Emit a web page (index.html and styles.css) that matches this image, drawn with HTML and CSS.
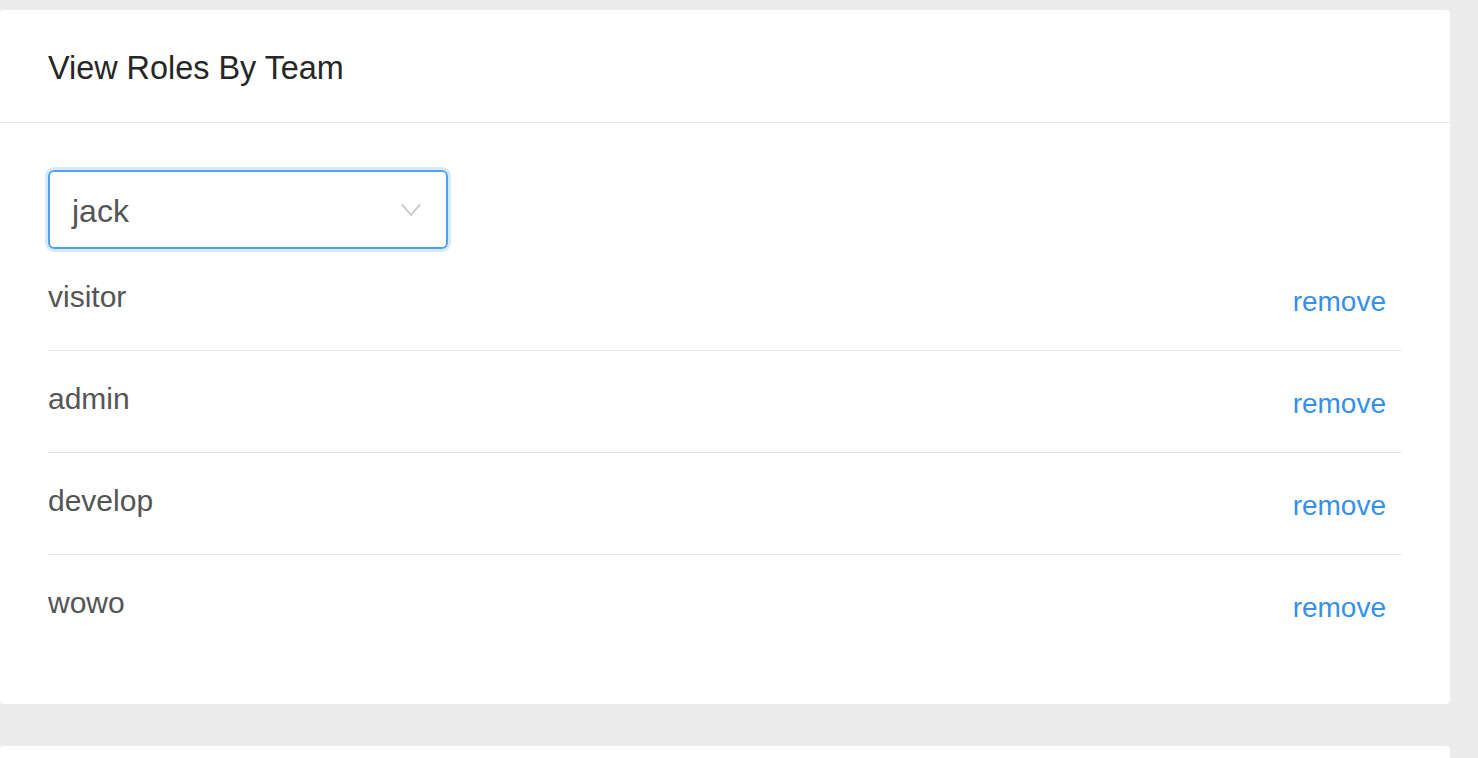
FILE: index.html
```html
<!DOCTYPE html>
<html lang="en">
<head>
<meta charset="utf-8">
<title>View Roles By Team</title>
<link rel="stylesheet" href="styles.css">
</head>
<body>
<div class="page">
  <section class="card">
    <header class="card-head">
      <h1 class="card-title">View Roles By Team</h1>
    </header>
    <div class="card-body">
      <div class="select">
        <span class="select-value">jack</span>
        <svg class="chevron" width="20" height="14" viewBox="0 0 20 14" aria-hidden="true">
          <path d="M1 1.5 L10 12 L19 1.5" fill="none" stroke="#c2c2c2" stroke-width="1.6"/>
        </svg>
      </div>
      <ul class="role-list">
        <li class="role-row"><span class="role-name">visitor</span><a class="role-remove" href="#">remove</a></li>
        <li class="role-row"><span class="role-name">admin</span><a class="role-remove" href="#">remove</a></li>
        <li class="role-row"><span class="role-name">develop</span><a class="role-remove" href="#">remove</a></li>
        <li class="role-row"><span class="role-name">wowo</span><a class="role-remove" href="#">remove</a></li>
      </ul>
    </div>
  </section>
  <section class="card card-next"></section>
</div>
</body>
</html>
```

FILE: styles.css
```css
html, body {
  margin: 0;
  padding: 0;
  background: #ececec;
  font-family: "Liberation Sans", Arial, sans-serif;
  overflow: hidden;
}

.page {
  padding: 10px 28px 0 0;
  display: flex;
  flex-direction: column;
  gap: 42px;
}

.card {
  background: #ffffff;
  border-radius: 4px;
}

.card-head {
  padding: 34px 48px 30px;
  border-bottom: 1px solid #e6e6e6;
}

.card-title {
  margin: 0;
  font-size: 32.4px;
  line-height: 48px;
  font-weight: 400;
  color: #262626;
}

.card-body {
  padding: 47px 48px 48px;
}

.select {
  box-sizing: border-box;
  width: 400px;
  height: 79px;
  border: 2px solid #4ea2f0;
  border-radius: 6px;
  box-shadow: 0 0 0 3px #d6eafc;
  display: flex;
  align-items: center;
  justify-content: space-between;
  padding: 3px 25px 0 22px;
}

.select-value {
  font-size: 32px;
  color: #555555;
}

.chevron {
  display: block;
  margin-top: -3px;
}

.role-list {
  list-style: none;
  margin: 0;
  padding: 0;
}

.role-row {
  display: flex;
  justify-content: space-between;
  align-items: flex-start;
  padding: 25px 16px 26px 0;
  border-bottom: 1px solid #e6e6e6;
}

.role-row:last-child {
  border-bottom: none;
}

.role-name {
  font-size: 30px;
  line-height: 45px;
  color: #555555;
}

.role-remove {
  font-size: 28px;
  line-height: 45px;
  margin-top: 5px;
  color: #3590e8;
  text-decoration: none;
}

.card-next {
  height: 40px;
}
```
